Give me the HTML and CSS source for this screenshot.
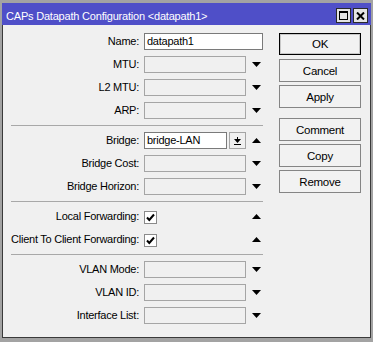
FILE: index.html
```html
<!DOCTYPE html>
<html>
<head>
<meta charset="utf-8">
<link rel="stylesheet" href="styles.css">
</head>
<body>
<div class="frame">
  <div class="win">
    <div class="titlebar">
      <span class="title">CAPs Datapath Configuration &lt;datapath1&gt;</span>
      <div class="tbtns">
        <span class="tbtn"><svg width="9" height="9" viewBox="0 0 9 9"><path d="M0 0H9V9H0Z M1 2V8H8V2Z" fill="#000" fill-rule="evenodd"/></svg></span>
        <span class="tbtn"><svg width="9" height="8" viewBox="0 0 9 8"><path d="M1 0.5L8 7.5M8 0.5L1 7.5" stroke="#000" stroke-width="2" fill="none"/></svg></span>
      </div>
    </div>
    <div class="content">
      <div class="form">
        <div class="row"><span class="lbl">Name:</span><div class="inp white span2">datapath1</div></div>
        <div class="row"><span class="lbl">MTU:</span><div class="inp"></div><span class="arr"><svg width="9" height="5" viewBox="0 0 9 5"><path d="M0 0H9L4.5 5Z" fill="#000"/></svg></span></div>
        <div class="row"><span class="lbl">L2 MTU:</span><div class="inp"></div><span class="arr"><svg width="9" height="5" viewBox="0 0 9 5"><path d="M0 0H9L4.5 5Z" fill="#000"/></svg></span></div>
        <div class="row"><span class="lbl">ARP:</span><div class="inp"></div><span class="arr"><svg width="9" height="5" viewBox="0 0 9 5"><path d="M0 0H9L4.5 5Z" fill="#000"/></svg></span></div>
        <div class="sep"></div>
        <div class="row"><span class="lbl">Bridge:</span>
          <div class="combo"><div class="inp white cinp">bridge-LAN</div><span class="dbtn"><svg width="7" height="8" viewBox="0 0 7 8"><path d="M3 0H4V2H3Z M0 2H7L3.5 6Z M0 7H7V8H0Z" fill="#000"/></svg></span></div>
          <span class="arr"><svg width="9" height="5" viewBox="0 0 9 5"><path d="M0 5H9L4.5 0Z" fill="#000"/></svg></span></div>
        <div class="row"><span class="lbl">Bridge Cost:</span><div class="inp"></div><span class="arr"><svg width="9" height="5" viewBox="0 0 9 5"><path d="M0 0H9L4.5 5Z" fill="#000"/></svg></span></div>
        <div class="row"><span class="lbl">Bridge Horizon:</span><div class="inp"></div><span class="arr"><svg width="9" height="5" viewBox="0 0 9 5"><path d="M0 0H9L4.5 5Z" fill="#000"/></svg></span></div>
        <div class="sep"></div>
        <div class="row"><span class="lbl">Local Forwarding:</span><div class="cbcell"><span class="cb"><svg width="11" height="11" viewBox="0 0 11 11"><path d="M2 5.5L4.3 8L9 2.5" stroke="#000" stroke-width="2" fill="none"/></svg></span></div><span class="arr"><svg width="9" height="5" viewBox="0 0 9 5"><path d="M0 5H9L4.5 0Z" fill="#000"/></svg></span></div>
        <div class="row"><span class="lbl">Client To Client Forwarding:</span><div class="cbcell"><span class="cb"><svg width="11" height="11" viewBox="0 0 11 11"><path d="M2 5.5L4.3 8L9 2.5" stroke="#000" stroke-width="2" fill="none"/></svg></span></div><span class="arr"><svg width="9" height="5" viewBox="0 0 9 5"><path d="M0 5H9L4.5 0Z" fill="#000"/></svg></span></div>
        <div class="sep"></div>
        <div class="row"><span class="lbl">VLAN Mode:</span><div class="inp"></div><span class="arr"><svg width="9" height="5" viewBox="0 0 9 5"><path d="M0 0H9L4.5 5Z" fill="#000"/></svg></span></div>
        <div class="row"><span class="lbl">VLAN ID:</span><div class="inp"></div><span class="arr"><svg width="9" height="5" viewBox="0 0 9 5"><path d="M0 0H9L4.5 5Z" fill="#000"/></svg></span></div>
        <div class="row"><span class="lbl">Interface List:</span><div class="inp"></div><span class="arr"><svg width="9" height="5" viewBox="0 0 9 5"><path d="M0 0H9L4.5 5Z" fill="#000"/></svg></span></div>
      </div>
      <div class="buttons">
        <div class="btn default">OK</div>
        <div class="btn">Cancel</div>
        <div class="btn">Apply</div>
        <div class="btn gapped">Comment</div>
        <div class="btn">Copy</div>
        <div class="btn">Remove</div>
      </div>
    </div>
  </div>
</div>
</body>
</html>
```
FILE: styles.css
```css
html, body {
  margin: 0;
  padding: 0;
}
body {
  font-family: "Liberation Sans", Arial, sans-serif;
  font-size: 11px;
  letter-spacing: -0.25px;
  color: #000;
}
.frame {
  width: 373px;
  height: 342px;
  box-sizing: border-box;
  padding: 3px 2px 4px 2px;
  background: #a3a3a3;
}
.win {
  height: 100%;
  box-sizing: border-box;
  border: 1px solid #3a3a3a;
  border-top: 0;
  display: flex;
  flex-direction: column;
  background: #f0f0f0;
}
.titlebar {
  height: 22px;
  flex: none;
  background: #4f4fc8;
  display: flex;
  justify-content: space-between;
  align-items: flex-start;
  padding: 0 3px 0 4px;
  margin: 0 -1px;
}
.title {
  color: #fff;
  line-height: 13px;
  margin-top: 7px;
  letter-spacing: -0.2px;
}
.tbtns {
  display: flex;
  gap: 2px;
  margin-top: 5px;
}
.tbtn {
  width: 15px;
  height: 15px;
  box-sizing: border-box;
  border: 1px solid #2a2a2a;
  background: #e4e4e4;
  display: flex;
  align-items: center;
  justify-content: center;
}
.content {
  flex: 1;
  display: flex;
  padding: 8px 8px 0 0;
}
.form {
  width: 261px;
  flex: none;
}
.row {
  display: grid;
  grid-template-columns: 141px 102px 18px;
  height: 17px;
  margin-bottom: 6px;
  align-items: center;
}
.lbl {
  text-align: right;
  padding-right: 5px;
  white-space: nowrap;
  line-height: 17px;
}
.inp {
  height: 17px;
  box-sizing: border-box;
  border: 1px solid #a5a5a5;
  background: #f0f0f0;
  padding-left: 2px;
  line-height: 15px;
}
.inp.white {
  background: #fff;
  border-color: #7a7a7a;
}
.inp.span2 {
  grid-column: 2 / span 2;
  width: 119px;
}
.combo {
  display: flex;
  gap: 2px;
  height: 17px;
}
.cinp {
  width: 83px;
}
.dbtn {
  width: 17px;
  height: 17px;
  box-sizing: border-box;
  border: 1px solid #a5a5a5;
  background: #f0f0f0;
  display: flex;
  align-items: center;
  justify-content: center;
}
.arr {
  display: flex;
  justify-content: center;
  align-items: center;
  padding-left: 2px;
}
.cbcell {
  display: flex;
  align-items: center;
}
.cb {
  width: 13px;
  height: 13px;
  box-sizing: border-box;
  border: 1px solid #8a8a8a;
  background: #fff;
  display: flex;
  align-items: center;
  justify-content: center;
  margin-top: 2px;
}
.sep {
  height: 1px;
  width: 252px;
  margin: 1px 0 6px 8px;
  background: #a8a8a8;
}
.buttons {
  margin-left: 15px;
  width: 82px;
  display: flex;
  flex-direction: column;
  gap: 3px;
}
.btn {
  height: 23px;
  box-sizing: border-box;
  border: 1px solid #858585;
  background: #f2f2f2;
  display: flex;
  align-items: center;
  justify-content: center;
  font-size: 11.5px;
}
.btn.default {
  border-color: #000;
  box-shadow: inset 0 0 0 1px #c8c8c8;
  height: 22px;
  margin-bottom: 1px;
}
.btn.gapped {
  margin-top: 7px;
}
```
